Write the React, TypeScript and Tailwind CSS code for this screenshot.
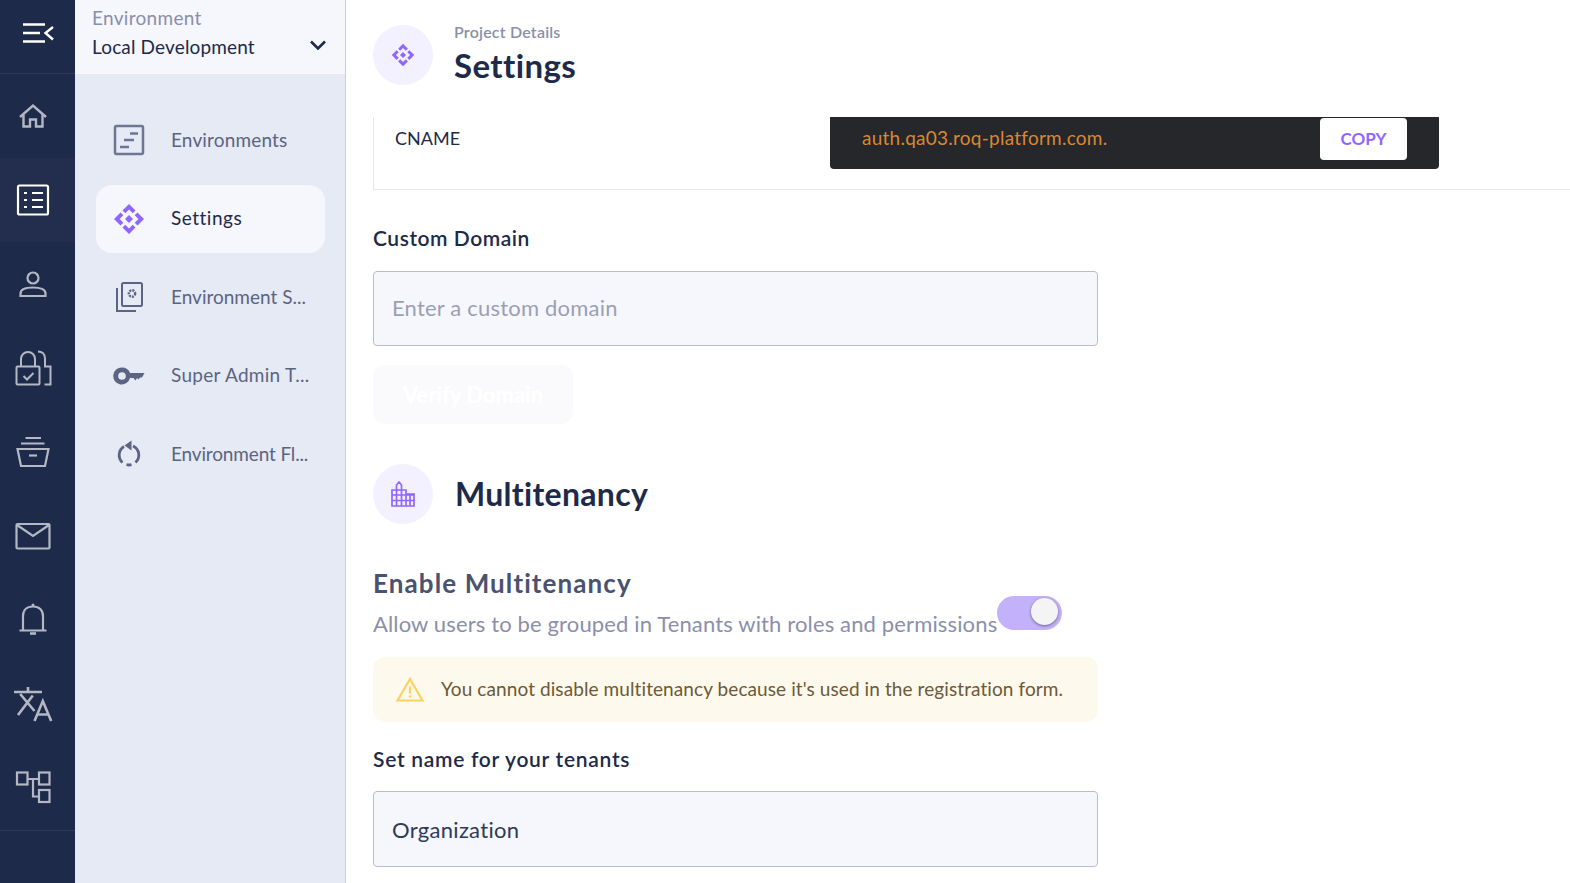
import { ReactNode } from "react";

const SettingsGlyph = ({ className }: { className: string }) => (
  <svg viewBox="0 0 32 32" className={className} fill="currentColor">
    <path d="M16 1l6.500 6.500-2.800 2.800-3.700-3.700-3.700 3.700-2.800-2.800z" />
    <path d="M16 31l6.500-6.500-2.800-2.800-3.700 3.700-3.700-3.700-2.800 2.800z" />
    <path d="M1 16l6.500-6.500 2.800 2.800-3.700 3.700 3.700 3.700-2.800 2.800z" />
    <path d="M31 16l-6.500-6.500-2.800 2.800 3.700 3.700-3.700 3.700 2.800 2.800z" />
    <path d="M16 12l4 4-4 4-4-4z" />
  </svg>
);

const railIcons: ReactNode[] = [
  <g key="home" strokeWidth="2.400">
    <path d="M5 19 18 7.500 31 19" />
    <path d="M8.500 16.500V28.500H15v-7h6v7h6.500V16.500" />
  </g>,
  <g key="list" strokeWidth="2.200">
    <rect x="3" y="3.500" width="30" height="29" rx="1.500" />
    <path d="M17 11h11M17 18h11M17 25h11M9 11h3M9 18h3M9 25h3" />
  </g>,
  <g key="user" strokeWidth="2.200">
    <circle cx="18" cy="12" r="5.500" />
    <path d="M5.500 30v-2.500c0-4 5-6 12.500-6s12.500 2 12.500 6V30z" />
  </g>,
  <g key="locks" strokeWidth="2">
    <rect x="1.500" y="16.500" width="23" height="18" rx="1" />
    <path d="M6 16V9a7 7 0 0 1 14 0v7M8.500 26l3.500 3.500 6.500-6.500" />
    <path d="M23 1.500c4 0 7 2.500 7 7v8h5.500v18h-6" />
  </g>,
  <g key="archive" strokeWidth="2.200">
    <path d="M10.500 4H26M6 9.500h23.500M2.500 15h31L30 32H6z" />
    <path d="M14 21.500h8" />
  </g>,
  <g key="mail" strokeWidth="2.200">
    <rect x="1.500" y="6" width="33" height="24.500" rx="1" />
    <path d="M2 7 18 18 34 7" />
  </g>,
  <g key="bell" strokeWidth="2.200" transform="translate(0 -1)">
    <path d="M8 29V15c0-6 4-9.500 10-9.500S28 9 28 15v14M4.500 29.500h27" />
    <path d="M15 32.500h6" strokeWidth="2.600" />
    <circle cx="18" cy="4" r="1.500" fill="currentColor" stroke="none" />
  </g>,
  <g key="lang" strokeWidth="2.600" transform="translate(0 -1)">
    <path d="M-1 7h28M13 2v5M5.200 9l14.300 17M17.800 10.500 3 30" />
    <path d="M19.500 36l8.300-20 8.400 20M22 29.500h11.500" />
  </g>,
  <g key="tree" strokeWidth="2.200">
    <rect x="2" y="2.500" width="10.500" height="12" />
    <rect x="24" y="2.500" width="10.500" height="12" />
    <rect x="24" y="20" width="10.500" height="12" />
    <path d="M12.500 9H24M18 9v17.500h6" />
  </g>,
];

const subIcons: ReactNode[] = [
  <svg key="env" viewBox="0 0 32 32" className="h-[32px] w-[32px] text-[#6d7693]" fill="none" stroke="currentColor" strokeWidth="2.500">
    <rect x="2" y="2" width="28" height="28" rx="1.500" />
    <path d="M17 9.500h8M11 16h10M7 23h9" />
  </svg>,
  <SettingsGlyph key="settings" className="h-[32px] w-[32px] text-[#8f66ff]" />,
  <svg key="snapshots" viewBox="0 0 32 32" className="h-[32px] w-[32px] text-[#5b6482]" fill="none" stroke="currentColor" strokeWidth="2">
    <rect x="9" y="2" width="20" height="23" rx="1.500" />
    <path d="M4 7v23h19" />
    <circle cx="19" cy="12.500" r="3.200" strokeWidth="2.400" strokeDasharray="2 1" />
  </svg>,
  <svg key="key" viewBox="0 0 32 32" className="h-[32px] w-[32px] text-[#5b6482]" fill="currentColor">
    <path fillRule="evenodd" d="M9 7.500a8.500 8.500 0 0 1 8 5.500H31.500l-2.500 4.500h-2L25.500 19.500 24 18l-1.500 2.500-2-2.500H17A8.500 8.500 0 1 1 9 7.500zm0 4.700a3.800 3.800 0 1 0 0 7.600 3.800 3.800 0 0 0 0-7.600z" />
  </svg>,
  <svg key="flow" viewBox="0 0 32 32" className="h-[32px] w-[32px] text-[#5b6482]" fill="none" stroke="currentColor" strokeWidth="2.800">
    <path d="M20 8A10 10 0 0 1 22.500 24.500M18.500 26.700a10 10 0 0 1-5 0M9.500 24.500A10 10 0 0 1 11 8.500" />
    <path d="M18.500 2.500v10l-7-5z" fill="currentColor" stroke="none" />
  </svg>,
];

const items = [
  { label: "Environments", spacing: "tracking-[0.15px]" },
  { label: "Settings", spacing: "tracking-[0.5px]" },
  { label: "Environment S...", spacing: "tracking-normal" },
  { label: "Super Admin T...", spacing: "tracking-[0.3px]" },
  { label: "Environment Fl...", spacing: "tracking-[-0.15px]" },
];

export default function App() {
  return (
    <div className="flex h-screen w-full overflow-hidden bg-white font-['Lato',sans-serif] text-[#1e2a49]">
      {/* icon rail */}
      <aside className="flex w-[75px] shrink-0 flex-col bg-[#1e2a49]">
        <div className="flex h-[74px] items-center justify-center border-b border-[#2e3a59] pb-[8px] pl-[1px]">
          <svg viewBox="0 0 31 20" className="h-[20px] w-[31px] text-white" fill="none" stroke="currentColor" strokeWidth="2.400">
            <path d="M0 1.500h22M0 10h17M0 18.500h22M30 4l-7.500 6 7.500 6.500" />
          </svg>
        </div>
        <div className="flex flex-col border-b border-[#2e3a59]">
          {railIcons.map((icon, i) => (
            <div key={i} className={`flex h-[84px] items-center justify-center pr-[9px] ${i === 1 ? "bg-[#232e4e]" : ""}`}>
              <svg
                viewBox="0 0 36 36"
                className={`h-[36px] w-[36px] overflow-visible ${i === 1 ? "text-white" : "text-[#b3b8c4]"}`}
                fill="none"
                stroke="currentColor"
              >
                {icon}
              </svg>
            </div>
          ))}
        </div>
      </aside>

      {/* section menu */}
      <nav className="flex w-[271px] shrink-0 flex-col border-r border-[#c9cedb] bg-[#e6eaf5]">
        <div className="flex h-[74px] items-center justify-between bg-[#f5f7fc] pl-[17px] pr-[19px]">
          <div className="-mt-[9px]">
            <div className="text-[19px] leading-[24px] tracking-[0.3px] text-[#8a8fab]">Environment</div>
            <div className="mt-[4px] text-[19px] leading-[26px] tracking-[0.15px] text-[#1e2a49]">Local Development</div>
          </div>
          <svg viewBox="0 0 16 10" className="mt-[16px] h-[10px] w-[16px] text-[#1e2a49]" fill="none" stroke="currentColor" strokeWidth="2.600">
            <path d="M1 1.500 8 8.500l7-7" />
          </svg>
        </div>
        <div className="flex flex-col gap-[10.500px] pl-[21px] pr-[20px] pt-[32px]">
          {items.map((item, i) => (
            <div
              key={item.label}
              className={`flex h-[68px] items-center gap-[26px] rounded-[16px] pl-[17px] ${i === 1 ? "bg-[#f5f7fc] text-[#1e2a49]" : "text-[#5b6482]"}`}
            >
              {subIcons[i]}
              <span className={`whitespace-nowrap text-[19px] ${item.spacing}`}>{item.label}</span>
            </div>
          ))}
        </div>
      </nav>

      {/* page content */}
      <main className="min-w-0 flex-1 pl-[27px]">
        <header className="flex h-[117px] items-start gap-[21px] pt-[25px]">
          <div className="flex h-[60px] w-[60px] items-center justify-center rounded-full bg-[#f3f0ff]">
            <SettingsGlyph className="h-[24px] w-[24px] text-[#8f66ff]" />
          </div>
          <div>
            <div className="-mt-[4px] text-[16px] font-semibold leading-[22px] tracking-[0.2px] text-[#8a8fab]">Project Details</div>
            <h1 className="mt-[2px] text-[33px] font-bold leading-[40px] tracking-[0.4px]">Settings</h1>
          </div>
        </header>

        <section className="flex h-[73px] items-start border-b border-l border-[#e8e8e8] pl-[21px]">
          <span className="w-[435px] pt-[8px] text-[18px] leading-[26px]">CNAME</span>
          <div className="flex h-[52px] w-[609px] items-start justify-between rounded-b-[4px] bg-[#26272b] pl-[32px] pr-[32px] pt-px">
            <span className="pt-[7px] text-[19px] leading-[26px] tracking-[0.25px] text-[#d98732]">auth.qa03.roq-platform.com.</span>
            <button className="h-[42px] w-[87px] rounded-[4px] bg-white text-[17px] font-bold text-[#8f66ff]">COPY</button>
          </div>
        </section>

        <div className="w-[725px]">
          <h2 className="mt-[34px] text-[21px] font-semibold leading-[28px] tracking-[0.55px]">Custom Domain</h2>
          <div className="mt-[19px] flex h-[75px] items-center rounded-[4px] border border-[#b9bdc9] bg-[#f5f7fc] pb-[2px] pl-[18px] text-[22px] tracking-[0.2px] text-[#9a9fb5]">
            Enter a custom domain
          </div>
          <button className="mt-[19px] block h-[59px] w-[200px] rounded-[12px] bg-[#fafafc] text-[22px] font-bold text-white">
            Verify Domain
          </button>

          <div className="mt-[40px] flex items-center gap-[22px]">
            <div className="flex h-[60px] w-[60px] items-center justify-center rounded-full bg-[#f3f0ff]">
              <svg viewBox="0 0 24 26" className="h-[26px] w-[24px] text-[#8f66ff]" fill="none" stroke="currentColor" strokeWidth="1.700">
                <path d="M1 9h14v16H1zM15 13h8v12h-8zM5.500 9V4L8 1l2.500 3v5M1 14h22M1 19.500h22M5.500 9v16M10.500 9v16M19 13v12" />
              </svg>
            </div>
            <h2 className="pb-[1px] text-[32px] font-bold leading-[40px] tracking-[0.3px]">Multitenancy</h2>
          </div>

          <h3 className="mt-[42px] text-[26px] font-bold leading-[34px] tracking-[1.1px] text-[#4a5270]">Enable Multitenancy</h3>
          <div className="flex h-[47px] items-start whitespace-nowrap">
            <span className="pt-[8px] text-[22px] leading-[32px] tracking-[0.14px] text-[#8a8fab]">Allow users to be grouped in Tenants with roles and permissions</span>
            <span className="relative -mt-[4px] h-[34px] w-[65px] shrink-0 rounded-full bg-[#c4b1fb]">
              <span className="absolute right-[4px] top-[2px] h-[27px] w-[27px] rounded-full bg-[#f4f4f4] shadow-[0_1px_3px_rgba(0,0,0,0.45)]" />
            </span>
          </div>

          <div className="mt-[10px] flex h-[65px] items-center gap-[17px] rounded-[12px] bg-[#fef9ed] pl-[23px] text-[19px] tracking-[0.09px] text-[#6b5a35]">
            <svg viewBox="0 0 28 25" className="h-[25px] w-[28px] shrink-0 text-[#fbd25f]" fill="none" stroke="currentColor" strokeWidth="2.200">
              <path d="M14 2 26.500 23.500h-25zM14 9.500v7M14 18.500v2" />
            </svg>
            You cannot disable multitenancy because it's used in the registration form.
          </div>

          <h2 className="mt-[23px] text-[21px] font-semibold leading-[28px] tracking-[0.72px]">Set name for your tenants</h2>
          <div className="mt-[18px] flex h-[76px] items-center rounded-[4px] border border-[#b9bdc9] bg-[#f5f7fc] pl-[18px] text-[22px] tracking-[0.3px] text-[#2f3a57]">
            Organization
          </div>
        </div>
      </main>
    </div>
  );
}
